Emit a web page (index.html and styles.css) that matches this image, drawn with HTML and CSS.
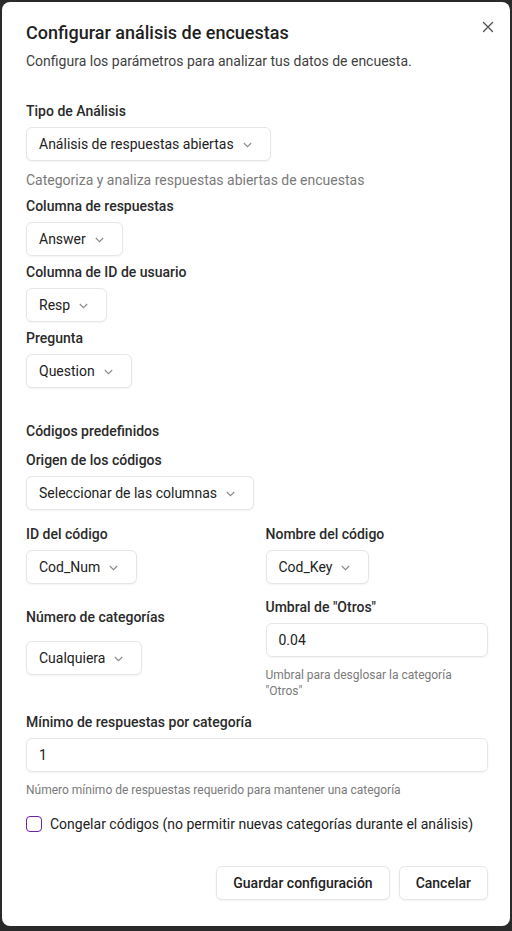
FILE: index.html
```html
<!DOCTYPE html>
<html lang="es">
<head>
<meta charset="utf-8">
<title>Configurar análisis de encuestas</title>
<link rel="stylesheet" href="styles.css">
</head>
<body>
<div class="dialog">
  <button class="close" aria-label="Cerrar">
    <svg width="12" height="12" viewBox="0 0 12 12"><path d="M1.5 1.5 L10.5 10.5 M10.5 1.5 L1.5 10.5" stroke="#555" stroke-width="1.4" stroke-linecap="round"/></svg>
  </button>
  <header class="head">
    <h1 class="title">Configurar análisis de encuestas</h1>
    <p class="desc">Configura los parámetros para analizar tus datos de encuesta.</p>
  </header>

  <div class="stack">
    <div class="field">
      <label class="label">Tipo de Análisis</label>
      <div class="select"><span>Análisis de respuestas abiertas</span><svg class="chev" width="9" height="6" viewBox="0 0 9 6"><path d="M0.8 1 L4.5 4.7 L8.2 1" fill="none" stroke="#8a8a8a" stroke-width="1.1"/></svg></div>
      <p class="help big">Categoriza y analiza respuestas abiertas de encuestas</p>
    </div>
    <div class="field">
      <label class="label">Columna de respuestas</label>
      <div class="select"><span>Answer</span><svg class="chev" width="9" height="6" viewBox="0 0 9 6"><path d="M0.8 1 L4.5 4.7 L8.2 1" fill="none" stroke="#8a8a8a" stroke-width="1.1"/></svg></div>
    </div>
    <div class="field">
      <label class="label">Columna de ID de usuario</label>
      <div class="select"><span>Resp</span><svg class="chev" width="9" height="6" viewBox="0 0 9 6"><path d="M0.8 1 L4.5 4.7 L8.2 1" fill="none" stroke="#8a8a8a" stroke-width="1.1"/></svg></div>
    </div>
    <div class="field">
      <label class="label">Pregunta</label>
      <div class="select"><span>Question</span><svg class="chev" width="9" height="6" viewBox="0 0 9 6"><path d="M0.8 1 L4.5 4.7 L8.2 1" fill="none" stroke="#8a8a8a" stroke-width="1.1"/></svg></div>
    </div>
  </div>

  <section class="codes">
    <h2 class="section-title">Códigos predefinidos</h2>
    <div class="field">
      <label class="label">Origen de los códigos</label>
      <div class="select"><span>Seleccionar de las columnas</span><svg class="chev" width="9" height="6" viewBox="0 0 9 6"><path d="M0.8 1 L4.5 4.7 L8.2 1" fill="none" stroke="#8a8a8a" stroke-width="1.1"/></svg></div>
    </div>

    <div class="grid">
      <div class="field">
        <label class="label">ID del código</label>
        <div class="select"><span>Cod_Num</span><svg class="chev" width="9" height="6" viewBox="0 0 9 6"><path d="M0.8 1 L4.5 4.7 L8.2 1" fill="none" stroke="#8a8a8a" stroke-width="1.1"/></svg></div>
      </div>
      <div class="field">
        <label class="label">Nombre del código</label>
        <div class="select"><span>Cod_Key</span><svg class="chev" width="9" height="6" viewBox="0 0 9 6"><path d="M0.8 1 L4.5 4.7 L8.2 1" fill="none" stroke="#8a8a8a" stroke-width="1.1"/></svg></div>
      </div>
      <div class="field centered">
        <label class="label">Número de categorías</label>
        <div class="select"><span>Cualquiera</span><svg class="chev" width="9" height="6" viewBox="0 0 9 6"><path d="M0.8 1 L4.5 4.7 L8.2 1" fill="none" stroke="#8a8a8a" stroke-width="1.1"/></svg></div>
      </div>
      <div class="field">
        <label class="label">Umbral de "Otros"</label>
        <div class="input">0.04</div>
        <p class="help">Umbral para desglosar la categoría "Otros"</p>
      </div>
    </div>

    <div class="field">
      <label class="label">Mínimo de respuestas por categoría</label>
      <div class="input">1</div>
      <p class="help">Número mínimo de respuestas requerido para mantener una categoría</p>
    </div>

    <div class="check-row">
      <span class="checkbox"></span>
      <span class="check-label">Congelar códigos (no permitir nuevas categorías durante el análisis)</span>
    </div>
  </section>

  <footer class="actions">
    <button class="btn">Guardar configuración</button>
    <button class="btn">Cancelar</button>
  </footer>
</div>
</body>
</html>
```

FILE: styles.css
```css
* { box-sizing: border-box; }
html, body { margin: 0; padding: 0; }
body {
  background: #2a2a2a;
  font-family: Roboto, Lato, sans-serif;
  color: #1c1c1c;
  width: 512px;
  height: 931px;
  overflow: hidden;
}
.dialog {
  position: relative;
  margin: 2px 2px 0 2px;
  width: 508px;
  height: 924px;
  background: #fff;
  border-radius: 8px;
  padding: 18px 22px 24px 24px;
}
.close {
  position: absolute;
  top: 18px;
  right: 15px;
  width: 14px;
  height: 14px;
  padding: 0;
  border: 0;
  background: none;
  display: flex;
  align-items: center;
  justify-content: center;
}
.head { margin-bottom: 30px; }
.title {
  margin: 0;
  font-size: 18px;
  font-weight: 500;
  line-height: 26px;
  color: #1f1f1f;
}
.desc {
  margin: 5px 0 0 0;
  font-size: 14px;
  line-height: 20px;
  color: #3f3f3f;
}
.stack { display: flex; flex-direction: column; gap: 6px; }
.field { display: flex; flex-direction: column; align-items: flex-start; gap: 6px; }
.label {
  font-size: 14px;
  line-height: 20px;
  font-weight: 500;
  color: #2a2a2a;
}
.select {
  height: 34px;
  display: inline-flex;
  align-items: center;
  gap: 9px;
  padding: 0 18px 0 12px;
  border: 1px solid #e6e6e6;
  border-radius: 6px;
  box-shadow: 0 1px 2px rgba(0,0,0,0.05);
  font-size: 14px;
  color: #222;
  background: #fff;
}
.chev { flex: none; margin-top: 1px; }
.help {
  margin: 3px 0 0 0;
  font-size: 12px;
  line-height: 16px;
  color: #7a7a7a;
}
.help.big { font-size: 14px; line-height: 20px; margin-top: 3px; }
.codes { margin-top: 33px; display: flex; flex-direction: column; }
.section-title {
  margin: 0 0 9px 0;
  font-size: 14px;
  line-height: 20px;
  font-weight: 500;
  color: #2a2a2a;
}
.grid {
  margin-top: 14px;
  display: grid;
  grid-template-columns: 1fr 1fr;
  column-gap: 17px;
  row-gap: 13px;
}
.field.centered { justify-content: center; gap: 14px; padding-bottom: 14px; }
.input {
  width: 100%;
  height: 34px;
  display: flex;
  align-items: center;
  padding: 0 12px;
  border: 1px solid #e6e6e6;
  border-radius: 6px;
  box-shadow: 0 1px 2px rgba(0,0,0,0.05);
  font-size: 14px;
  color: #222;
}
.grid + .field { margin-top: 13px; }
.grid .help { margin-top: 3px; }
.field .input + .help { margin-top: 4px; }
.check-row {
  margin-top: 16px;
  display: flex;
  align-items: center;
  gap: 8px;
}
.checkbox {
  width: 16px;
  height: 16px;
  border: 1.5px solid #6b21a8;
  border-radius: 4px;
  flex: none;
}
.check-label { font-size: 14px; line-height: 20px; color: #222; }
.actions {
  margin-top: 32px;
  display: flex;
  justify-content: flex-end;
  gap: 9px;
}
.btn {
  height: 34px;
  padding: 0 16px;
  border: 1px solid #e6e6e6;
  border-radius: 6px;
  background: #fff;
  box-shadow: 0 1px 2px rgba(0,0,0,0.05);
  font-family: inherit;
  font-size: 14px;
  font-weight: 500;
  color: #222;
}
```
